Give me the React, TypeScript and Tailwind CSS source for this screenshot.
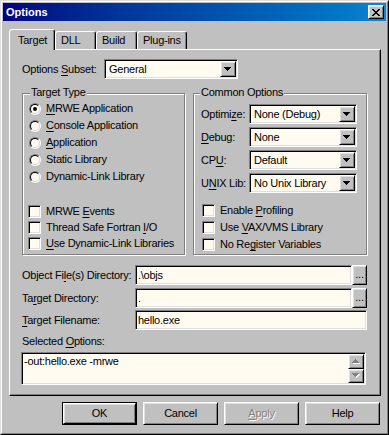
import React from "react";

// Win98 bevels
const raised =
  "border border-t-white border-l-white border-r-black border-b-black bg-[#c0c0c0] shadow-[inset_1px_1px_0_#dfdfdf,inset_-1px_-1px_0_#808080]";
const sunken =
  "border border-t-[#808080] border-l-[#808080] border-r-white border-b-white bg-[#fffbf0] shadow-[inset_1px_1px_0_#000,inset_-1px_-1px_0_#dfdfdf]";
const etched =
  "border border-[#808080] shadow-[inset_1px_1px_0_#fff,1px_1px_0_#fff]";

function U({ children }: { children: React.ReactNode }) {
  return <span className="underline decoration-1 underline-offset-[2px]">{children}</span>;
}

function Arrow({ up = false, disabled = false }: { up?: boolean; disabled?: boolean }) {
  const d = up
    ? "M3 0h1v1H3zM2 1h3v1H2zM1 2h5v1H1zM0 3h7v1H0z"
    : "M0 0h7v1H0zM1 1h5v1H1zM2 2h3v1H2zM3 3h1v1H3z";
  return (
    <svg width="8" height="5" viewBox="0 0 8 5" shapeRendering="crispEdges">
      {disabled && <path d={d} fill="#fff" transform="translate(1 1)" />}
      <path d={d} fill={disabled ? "#808080" : "#000"} />
    </svg>
  );
}

function Combo({ value, className }: { value: string; className: string }) {
  return (
    <div className={`flex h-[20px] items-center p-[1px] ${sunken} ${className}`}>
      <span className="flex-1 truncate pl-[3px]">{value}</span>
      <span className={`flex h-[16px] w-[16px] items-center justify-center ${raised}`}>
        <Arrow />
      </span>
    </div>
  );
}

function Field({ value, className }: { value: string; className: string }) {
  return (
    <div className={`flex h-[20px] items-center p-[1px] ${sunken} ${className}`}>
      <span className="pl-[1px]">{value}</span>
    </div>
  );
}

function Browse() {
  return (
    <span className={`flex h-[20px] w-[15px] items-end justify-center pb-[3px] ${raised}`}>
      ...
    </span>
  );
}

function Radio({ checked = false, children }: { checked?: boolean; children: React.ReactNode }) {
  return (
    <div className="flex h-[17px] items-center">
      <span className="flex h-[12px] w-[12px] items-center justify-center rounded-full border border-t-[#808080] border-l-[#808080] border-r-white border-b-white">
        <span className="flex h-[10px] w-[10px] items-center justify-center rounded-full border border-t-black border-l-black border-r-[#dfdfdf] border-b-[#dfdfdf] bg-[#fffbf0]">
          {checked && <span className="h-[4px] w-[4px] rounded-full bg-black" />}
        </span>
      </span>
      <span className="ml-[5px]">{children}</span>
    </div>
  );
}

function Check({ children, className }: { children: React.ReactNode; className: string }) {
  return (
    <div className={`flex items-center ${className}`}>
      <span className={`h-[13px] w-[13px] ${sunken}`} />
      <span className="ml-[5px]">{children}</span>
    </div>
  );
}

function Tab({ active = false, className, children }: { active?: boolean; className: string; children: React.ReactNode }) {
  return active ? (
    <div
      className={`relative z-10 -mb-[1px] flex h-[21px] items-center rounded-t-[3px] border-t border-l border-r border-t-white border-l-white border-r-black bg-[#c0c0c0] pl-[8px] shadow-[inset_-1px_0_0_#808080] ${className}`}
    >
      {children}
    </div>
  ) : (
    <div
      className={`flex h-[18px] items-center rounded-t-[3px] border-t border-l border-r border-t-white border-l-white border-r-black pl-[5px] shadow-[inset_-1px_0_0_#808080] ${className}`}
    >
      {children}
    </div>
  );
}

function Button({ children, isDefault = false, disabled = false }: { children: React.ReactNode; isDefault?: boolean; disabled?: boolean }) {
  const label = disabled ? "text-[#808080] [text-shadow:1px_1px_0_#fff]" : "";
  if (isDefault) {
    return (
      <div className="h-[23px] w-[75px] border border-black">
        <div className={`flex h-full w-full items-center justify-center ${raised}`}>{children}</div>
      </div>
    );
  }
  return (
    <div className={`flex h-[23px] w-[75px] items-center justify-center ${raised} ${label}`}>{children}</div>
  );
}

export default function App() {
  return (
    <div className="h-[435px] w-[389px] whitespace-nowrap border border-t-[#dfdfdf] border-l-[#dfdfdf] border-r-black border-b-black bg-[#c0c0c0] font-['Liberation_Sans',Arial,sans-serif] text-[11px] leading-[13px] tracking-[-0.25px] text-black">
      <div className="flex h-full flex-col border border-t-white border-l-white border-r-[#808080] border-b-[#808080] p-[1px]">
        {/* title bar */}
        <div className="flex h-[18px] items-center bg-linear-to-r from-[#000080] to-[#1084d0] pl-[3px] pr-[2px]">
          <span className="flex-1 font-bold tracking-normal text-white">Options</span>
          <span className={`flex h-[14px] w-[16px] items-center justify-center ${raised}`}>
            <svg width="8" height="7" viewBox="0 0 8 7" shapeRendering="crispEdges">
              <path d="M0 0h2v1H0zM6 0h2v1H6zM1 1h2v1H1zM5 1h2v1H5zM2 2h4v1H2zM3 3h2v1H3zM2 4h4v1H2zM1 5h2v1H1zM5 5h2v1H5zM0 6h2v1H0zM6 6h2v1H6z" />
            </svg>
          </span>
        </div>

        <div className="flex flex-1 flex-col pl-[6px] pr-[5px] pt-[8px]">
          {/* tabs */}
          <div className="flex h-[20px] items-end">
            <Tab active className="w-[46px]">Target</Tab>
            <Tab className="w-[41px]">DLL</Tab>
            <Tab className="w-[41px]">Build</Tab>
            <Tab className="w-[50px]">Plug-ins</Tab>
          </div>

          {/* tab panel */}
          <div className="flex h-[347px] flex-col border border-t-white border-l-white border-r-black border-b-black pl-[12px] pt-[9px] shadow-[inset_-1px_-1px_0_#808080]">
            <div className="flex h-[20px] items-center">
              <span className="w-[82px]">
                Options <U>S</U>ubset:
              </span>
              <Combo value="General" className="w-[134px]" />
            </div>

            <div className="mt-[14px] flex gap-[8px]">
              <div className={`flex h-[162px] w-[163px] flex-col pl-[6px] ${etched}`}>
                <span className="-mt-[8px] ml-[1px] w-fit bg-[#c0c0c0] px-[1px]">Target Type</span>
                <div className="mt-[1px] flex flex-col">
                  <Radio checked>
                    <U>M</U>RWE Application
                  </Radio>
                  <Radio>
                    <U>C</U>onsole Application
                  </Radio>
                  <Radio>
                    <U>A</U>pplication
                  </Radio>
                  <Radio>Static Library</Radio>
                  <Radio>Dynamic-Link Library</Radio>
                </div>
                <div className="mt-[18px] flex flex-col">
                  <Check className="-ml-[1px] h-[16px]">
                    MRWE <U>E</U>vents
                  </Check>
                  <Check className="-ml-[1px] h-[16px]">
                    Thread Safe Fortran <U>I</U>/O
                  </Check>
                  <Check className="-ml-[1px] h-[16px]">
                    <U>U</U>se Dynamic-Link Libraries
                  </Check>
                </div>
              </div>

              <div className={`flex h-[162px] w-[174px] flex-col pl-[7px] ${etched}`}>
                <span className="-mt-[8px] -ml-[1px] w-fit bg-[#c0c0c0] px-[1px]">Common Options</span>
                <div className="mt-[5px] flex flex-col gap-[3px]">
                  <div className="flex h-[20px] items-center">
                    <span className="w-[48px]">
                      Optimi<U>z</U>e:
                    </span>
                    <Combo value="None (Debug)" className="w-[108px]" />
                  </div>
                  <div className="flex h-[20px] items-center">
                    <span className="w-[48px]">
                      <U>D</U>ebug:
                    </span>
                    <Combo value="None" className="w-[108px]" />
                  </div>
                  <div className="flex h-[20px] items-center">
                    <span className="w-[48px]">
                      CP<U>U</U>:
                    </span>
                    <Combo value="Default" className="w-[108px]" />
                  </div>
                  <div className="flex h-[20px] items-center">
                    <span className="w-[48px]">
                      U<U>N</U>IX Lib:
                    </span>
                    <Combo value="No Unix Library" className="w-[108px]" />
                  </div>
                </div>
                <div className="mt-[9px] flex flex-col">
                  <Check className="ml-[1px] h-[17px]">
                    Enable <U>P</U>rofiling
                  </Check>
                  <Check className="ml-[1px] h-[17px]">
                    Use <U>V</U>AX/VMS Library
                  </Check>
                  <Check className="ml-[1px] h-[17px]">
                    No Re<U>g</U>ister Variables
                  </Check>
                </div>
              </div>
            </div>

            <div className="mt-[10px] flex h-[20px] items-center">
              <span className="w-[113px]">
                Object Fi<U>l</U>e(s) Directory:
              </span>
              <Field value={".\\objs"} className="w-[217px]" />
              <Browse />
            </div>
            <div className="mt-[3px] flex h-[20px] items-center">
              <span className="w-[113px]">
                Ta<U>r</U>get Directory:
              </span>
              <Field value="." className="w-[217px]" />
              <Browse />
            </div>
            <div className="mt-[2px] flex h-[20px] items-center">
              <span className="w-[113px]">
                <U>T</U>arget Filename:
              </span>
              <Field value="hello.exe" className="w-[232px]" />
            </div>

            <span className="mt-[5px]">
              Selected <U>O</U>ptions:
            </span>
            <div className={`-ml-[1px] mt-[4px] flex h-[33px] w-[345px] p-[1px] ${sunken}`}>
              <span className="flex-1 pl-[1px] pt-[1px]">-out:hello.exe -mrwe</span>
              <div className="flex w-[16px] flex-col">
                <span className={`flex flex-1 items-center justify-center ${raised}`}>
                  <Arrow up disabled />
                </span>
                <span className={`flex flex-1 items-center justify-center ${raised}`}>
                  <Arrow disabled />
                </span>
              </div>
            </div>
          </div>

          {/* dialog buttons */}
          <div className="mt-[6px] flex justify-end gap-[6px] pr-[1px]">
            <Button isDefault>OK</Button>
            <Button>Cancel</Button>
            <Button disabled>
              <U>A</U>pply
            </Button>
            <Button>Help</Button>
          </div>
        </div>
      </div>
    </div>
  );
}
